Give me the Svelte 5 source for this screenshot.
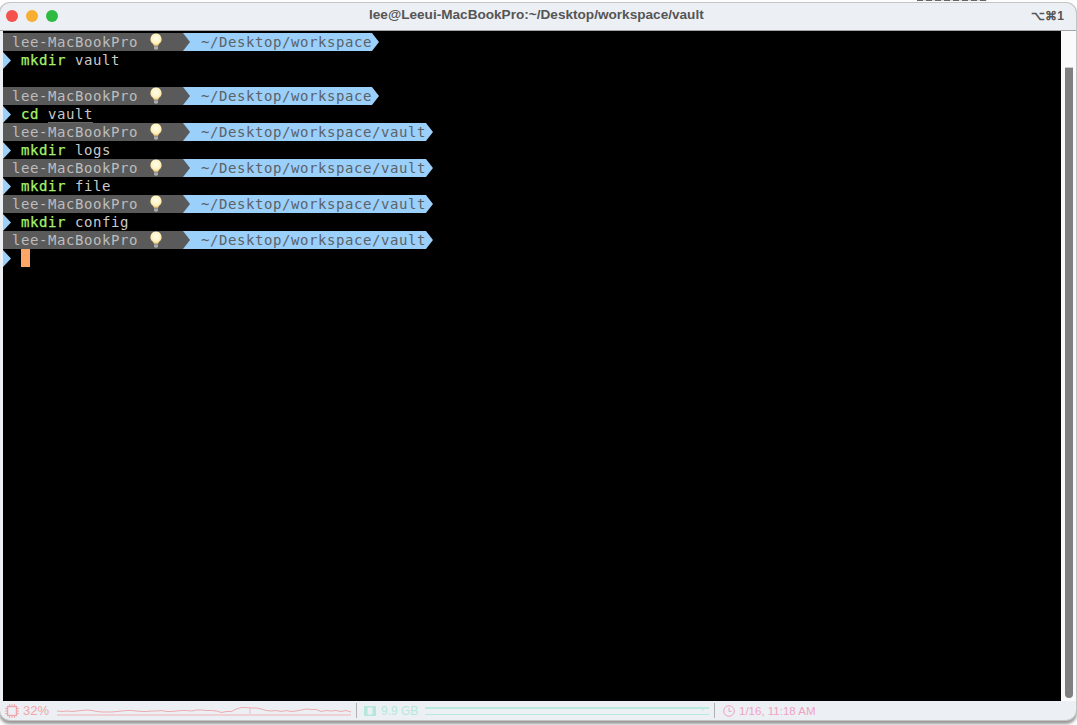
<script lang="ts">
  type Row = { kind: "prompt"; path: string } | { kind: "cmd"; cmd?: string; arg?: string; line?: boolean; cursor?: boolean } | { kind: "blank" };

  const base = "~/Desktop/workspace";
  const vault = base + "/vault";

  const rows: Row[] = [
    { kind: "prompt", path: base },
    { kind: "cmd", cmd: "mkdir", arg: "vault" },
    { kind: "blank" },
    { kind: "prompt", path: base },
    { kind: "cmd", cmd: "cd", arg: "vault", line: true },
    { kind: "prompt", path: vault },
    { kind: "cmd", cmd: "mkdir", arg: "logs" },
    { kind: "prompt", path: vault },
    { kind: "cmd", cmd: "mkdir", arg: "file" },
    { kind: "prompt", path: vault },
    { kind: "cmd", cmd: "mkdir", arg: "config" },
    { kind: "prompt", path: vault },
    { kind: "cmd", cursor: true },
  ];

  // cpu history, y inside a 12px tall sparkline
  const cpu = [6,6.5,6,6.5,6,5.5,5,5.5,6.5,7,7,7,6.5,6,5.5,5.5,6,6.5,6.5,6,6,5.5,6.5,6.5,6,5.5,5.5,6,5,5,5.5,5.5,6,7.5,6.5,6.5,4,2.5,2.5,3,3,4,5.5,6,5.5,6.5,5.5,6.5,6,5,4,4.5,4.5,6.5,5.5,6,5.5,6.5,5.5,7];
  const spark = cpu.map((y, i) => `${((i * 294) / (cpu.length - 1)).toFixed(1)},${y}`).join(" ");
</script>

<div class="window">
  <span class="behind"></span>
  <header class="titlebar">
    <div class="lights">
      <span class="light red"></span>
      <span class="light amber"></span>
      <span class="light green"></span>
    </div>
    <div class="title">lee@Leeui-MacBookPro:~/Desktop/workspace/vault</div>
    <div class="keys">⌥⌘1</div>
  </header>

  <div class="body">
    <main class="term">
      {#each rows as row}
        <div class="row">
          {#if row.kind === "prompt"}
            <div class="seg-host">
              <span class="host">lee-MacBookPro</span>
              <svg class="bulb" width="14" height="18" viewBox="0 0 14 18">
                <defs>
                  <radialGradient id="glow" cx="50%" cy="40%" r="60%">
                    <stop offset="0%" stop-color="#fffdf0" />
                    <stop offset="65%" stop-color="#fff3c0" />
                    <stop offset="100%" stop-color="#eec878" />
                  </radialGradient>
                </defs>
                <path d="M7 0.5a5.6 5.6 0 0 0-3.2 10.2c.7.6.9 1.3 1 2.1h4.4c.1-.8.3-1.5 1-2.1A5.6 5.6 0 0 0 7 0.5z" fill="url(#glow)" />
                <path d="M5 13.2h4v2.4l-1 1.2H6l-1-1.2z" fill="#a9a9a9" />
              </svg>
            </div>
            <div class="seg-path">{row.path}</div>
          {:else if row.kind === "cmd"}
            <svg class="caret" width="8" height="18" viewBox="0 0 8 18">
              <path d="M0 1L8 9.5L0 18z" fill="#9bd0fb" />
            </svg>
            {#if row.cursor}
              <span class="cursor"></span>
            {:else}
              <span class="cmd">{row.cmd}</span>
              <span class="arg" class:line={row.line}>{row.arg}</span>
            {/if}
          {/if}
        </div>
      {/each}
    </main>
    <aside class="scroll">
      <div class="thumb"></div>
    </aside>
  </div>

  <footer class="status">
    <div class="cell cell-cpu">
      <svg class="chip" width="14" height="14" viewBox="0 0 14 14" fill="none" stroke="#eda6aa" stroke-width="1.4">
        <rect x="2.5" y="2.5" width="9" height="9" />
        <path d="M4.5 0v2M7 0v2M9.5 0v2M4.5 12v2M7 12v2M9.5 12v2M0 4.5h2M0 7h2M0 9.5h2M12 4.5h2M12 7h2M12 9.5h2" stroke-width="0.9" />
      </svg>
      <span class="cpu-val">32%</span>
      <svg class="graph" width="294" height="12" viewBox="0 0 294 12" fill="none">
        <polyline points={spark} stroke="#eeabae" stroke-width="1" />
        <path d="M0 10h294" stroke="#efb3b6" stroke-width="1" />
        <path d="M193 3v6" stroke="#f0bcbf" stroke-width="1" />
      </svg>
    </div>
    <div class="cell cell-mem">
      <svg width="12" height="10" viewBox="0 0 12 10">
        <path d="M0 0h12v10H0z M3.5 1.5v7h5v-7z" fill="#b5e8da" fill-rule="evenodd" />
      </svg>
      <span class="mem-val">9.9 GB</span>
      <svg class="graph" width="284" height="10" viewBox="0 0 284 10" fill="none" stroke="#b8ebdd">
        <path d="M0 2h284" stroke-width="2" />
        <path d="M0 8.5h284" stroke-width="1" />
        <path d="M278 2v3" stroke-width="1" />
      </svg>
    </div>
    <div class="cell cell-clock">
      <svg width="12" height="12" viewBox="0 0 12 12" fill="none" stroke="#eea3c4" stroke-width="1">
        <circle cx="6" cy="6" r="5.3" />
        <path d="M6 2.8V6.4H8.6" />
      </svg>
      <span class="clock-val">1/16, 11:18 AM</span>
    </div>
  </footer>
</div>

<style>
  :global(html), :global(body) {
    height: 725px;
  }
  :global(body) {
    background: #fdfdfd;
    overflow: hidden;
  }

  .window {
    width: 1076px;
    height: 717px;
    margin-top: 3px;
    display: flex;
    flex-direction: column;
    background: #eceff4;
    border-radius: 10px;
    box-shadow: 0 0 0 1px #c4c4c4, 0 3px 3px 1px #999;
    font-family: "Liberation Sans", Arial, sans-serif;
    position: relative;
  }
  /* bit of the desktop icon label peeking out above the window */
  .behind {
    position: absolute;
    left: 917px;
    top: -3px;
    width: 70px;
    height: 1px;
    background: repeating-linear-gradient(90deg, #666 0 6px, #ddd 6px 9px);
  }

  .titlebar {
    height: 26px;
    flex: none;
    display: flex;
    align-items: center;
    justify-content: space-between;
    border-bottom: 1px solid #a3a5a8;
    padding: 0 12px 1px 6px;
    position: relative;
  }
  .lights {
    display: flex;
    gap: 8px;
  }
  .light {
    width: 12px;
    height: 12px;
    border-radius: 50%;
  }
  .red { background: #f4504c; }
  .amber { background: #f7ae33; }
  .green { background: #2dbb41; }
  .title {
    position: absolute;
    left: 369px;
    top: 4px;
    font-size: 13.6px;
    font-weight: 700;
    color: #555;
    line-height: 16px;
    white-space: nowrap;
  }
  .keys {
    font-size: 12px;
    font-weight: 700;
    color: #555;
  }

  .body {
    height: 670px;
    flex: none;
    display: flex;
    padding-left: 3px;
  }
  .term {
    flex: 1;
    background: #000;
    padding-top: 2px;
    font-family: "DejaVu Sans Mono", monospace;
    font-size: 14px;
    letter-spacing: 0.57px;
    overflow: hidden;
  }
  .row {
    height: 18px;
    line-height: 18px;
    display: flex;
    white-space: nowrap;
    position: relative;
  }

  .seg-host {
    width: 187px;
    background: #5a5a5a;
    color: #bdbdbd;
    clip-path: polygon(0 0, 180px 0, 187px 9px, 180px 18px, 0 18px);
    padding-left: 9px;
    box-sizing: border-box;
    position: relative;
    z-index: 1;
  }
  .host {
    display: inline-block;
  }
  .bulb {
    position: absolute;
    left: 146px;
    top: 0;
  }
  .seg-path {
    margin-left: -7px;
    padding: 0 7px 0 18px;
    background: #9bd0fb;
    color: #5c6268;
    clip-path: polygon(0 0, calc(100% - 7px) 0, 100% 9px, calc(100% - 7px) 18px, 0 18px);
  }

  .caret {
    flex: none;
    display: block;
    margin-right: 10px;
  }
  .cmd {
    color: #a6f26d;
    -webkit-text-stroke: 0.25px #a6f26d;
    margin-right: 9px;
  }
  .arg {
    color: #c9c9c9;
  }
  .line {
    box-shadow: inset 0 -1px 0 #6a6a6a;
  }
  .cursor {
    width: 9px;
    height: 18px;
    background: #ffa666;
  }

  .scroll {
    width: 15px;
    flex: none;
    background: #fafafa;
    position: relative;
  }
  .thumb {
    position: absolute;
    left: 4px;
    top: 37px;
    bottom: 3px;
    width: 8px;
    background: #808080;
    border-radius: 0 0 4px 4px;
    box-shadow: 0 -1px 0 0 #ccc;
  }

  .status {
    flex: 1;
    display: flex;
    align-items: center;
    font-size: 13px;
    padding-left: 5px;
    border-radius: 0 0 10px 10px;
  }
  .cell {
    display: flex;
    align-items: center;
    height: 15px;
  }
  .cell-cpu {
    width: 352px;
    box-sizing: border-box;
    border-right: 1px solid #b0b0b0;
    color: #eda6aa;
  }
  .cpu-val { margin: 0 8px 0 4px; }
  .cell-mem {
    width: 358px;
    padding-left: 7px;
    box-sizing: border-box;
    border-right: 1px solid #b0b0b0;
    color: #b5e8da;
    font-size: 12px;
  }
  .mem-val { margin: 0 7px 0 5px; }
  .cell-clock {
    padding-left: 8px;
    color: #eea3c4;
    font-size: 11.5px;
  }
  .clock-val { margin-left: 4px; }
</style>
